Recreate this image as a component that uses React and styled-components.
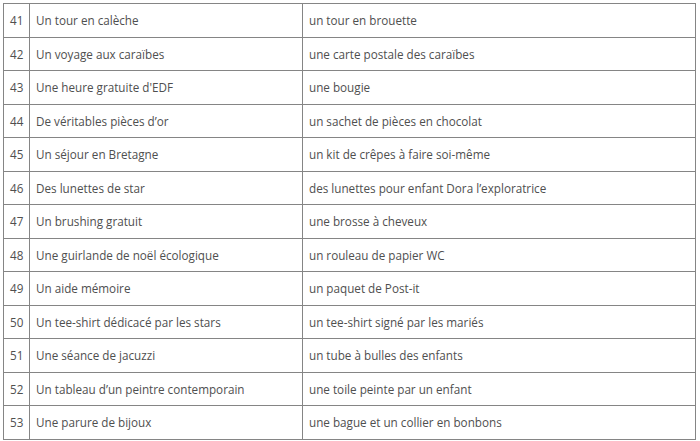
import React from 'react';
import styled, {createGlobalStyle} from 'styled-components';

const GlobalStyle = createGlobalStyle`
    html, body {
        margin: 0;
        padding: 0;
        background: #ffffff;
    }
`;

const rows = [
    [41, "Un tour en calèche", "un tour en brouette"],
    [42, "Un voyage aux caraïbes", "une carte postale des caraïbes"],
    [43, "Une heure gratuite d'EDF", "une bougie"],
    [44, "De véritables pièces d’or", "un sachet de pièces en chocolat"],
    [45, "Un séjour en Bretagne", "un kit de crêpes à faire soi-même"],
    [46, "Des lunettes de star", "des lunettes pour enfant Dora l’exploratrice"],
    [47, "Un brushing gratuit", "une brosse à cheveux"],
    [48, "Une guirlande de noël écologique", "un rouleau de papier WC"],
    [49, "Un aide mémoire", "un paquet de Post-it"],
    [50, "Un tee-shirt dédicacé par les stars", "un tee-shirt signé par les mariés"],
    [51, "Une séance de jacuzzi", "un tube à bulles des enfants"],
    [52, "Un tableau d’un peintre contemporain", "une toile peinte par un enfant"],
    [53, "Une parure de bijoux", "une bague et un collier en bonbons"],
];

const App = () => {
    return <Page>
        <GlobalStyle/>
        <Table>
            <colgroup>
                <col style={{width: 26}}/>
                <col style={{width: 273}}/>
                <col/>
            </colgroup>
            <tbody>
                {rows.map(([num, gift, joke]) => (
                    <Row key={num}>
                        <Cell>{num}</Cell>
                        <Cell>{gift}</Cell>
                        <Cell>{joke}</Cell>
                    </Row>
                ))}
            </tbody>
        </Table>
    </Page>
}

export default App;

const Page = styled.div`
    padding: 3px 4px 0 3px;
    width: 700px;
    height: 441px;
    box-sizing: border-box;
    overflow: hidden;
`;

const Table = styled.table`
    width: 693px;
    border-collapse: collapse;
    table-layout: fixed;
    border: 1px solid #7a7a7a;
    font-family: "Open Sans", "Noto Sans", sans-serif;
    font-size: 11.7px;
    color: #4f4f4f;
`;

const Row = styled.tr`
    height: 33.5px;
`;

const Cell = styled.td`
    border: 1px solid #858585;
    padding: 0 0 0 6px;
    vertical-align: middle;
    white-space: nowrap;
    line-height: 16px;
`;
